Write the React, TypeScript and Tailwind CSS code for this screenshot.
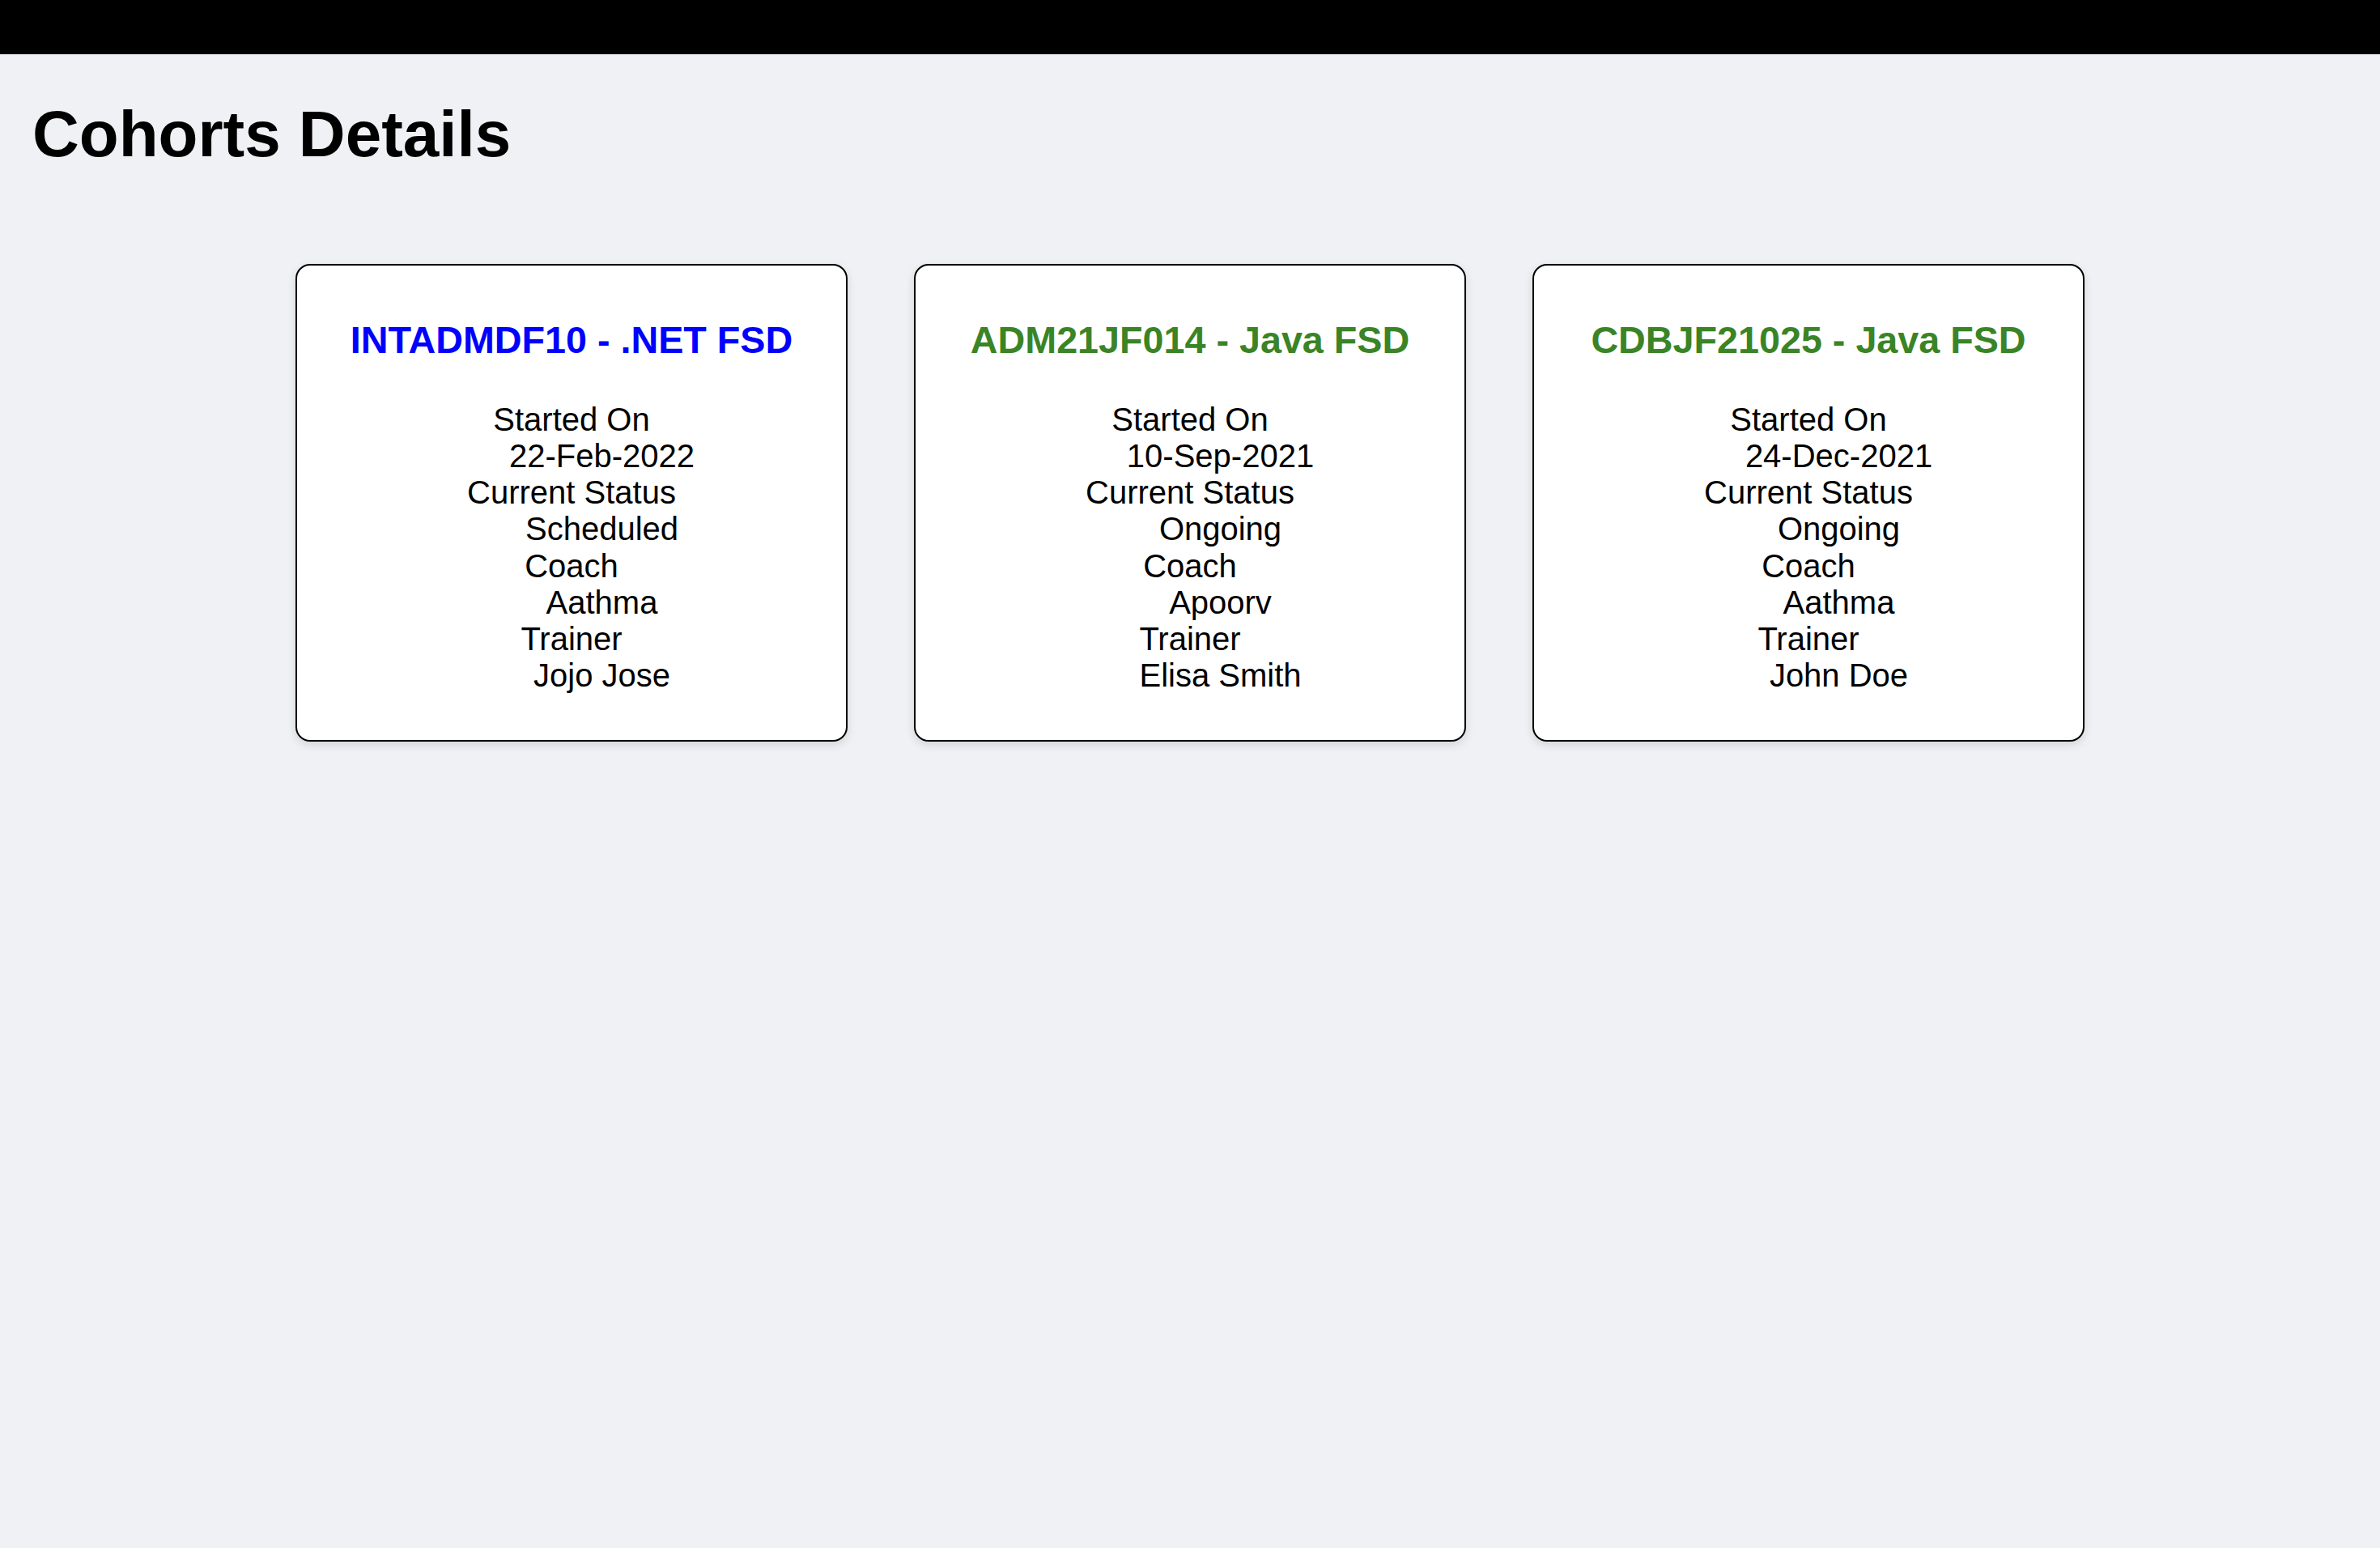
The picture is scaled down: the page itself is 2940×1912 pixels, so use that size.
import React from "react";

interface Cohort {
  code: string;
  technology: string;
  startedOn: string;
  status: string;
  coach: string;
  trainer: string;
}

const COHORTS: Cohort[] = [
  {
    code: "INTADMDF10",
    technology: ".NET FSD",
    startedOn: "22-Feb-2022",
    status: "Scheduled",
    coach: "Aathma",
    trainer: "Jojo Jose",
  },
  {
    code: "ADM21JF014",
    technology: "Java FSD",
    startedOn: "10-Sep-2021",
    status: "Ongoing",
    coach: "Apoorv",
    trainer: "Elisa Smith",
  },
  {
    code: "CDBJF21025",
    technology: "Java FSD",
    startedOn: "24-Dec-2021",
    status: "Ongoing",
    coach: "Aathma",
    trainer: "John Doe",
  },
];

function CohortCard({ cohort }: { cohort: Cohort }) {
  // ongoing cohorts get green, the rest blue
  const titleColor =
    cohort.status === "Ongoing" ? "text-[#3a8426]" : "text-[#0000ff]";

  return (
    <div className="w-[682px] rounded-[18px] border-2 border-black bg-white px-[20px] py-[20px] text-center shadow-[0_4px_12px_rgba(0,0,0,0.12)]">
      <h3
        className={`mt-[46px] mb-[49px] text-[46.7px] font-bold leading-[53px] ${titleColor}`}
      >
        {cohort.code} - {cohort.technology}
      </h3>
      <dl className="mb-[36px] text-[40px] leading-[45.25px]">
        <dt>Started On</dt>
        <dd className="ml-[75px]">{cohort.startedOn}</dd>
        <dt>Current Status</dt>
        <dd className="ml-[75px]">{cohort.status}</dd>
        <dt>Coach</dt>
        <dd className="ml-[75px]">{cohort.coach}</dd>
        <dt>Trainer</dt>
        <dd className="ml-[75px]">{cohort.trainer}</dd>
      </dl>
    </div>
  );
}

export default function App() {
  return (
    <div className="min-h-screen bg-[#f0f1f5] font-['Liberation_Sans',Arial,sans-serif] text-black">
      <div className="h-[67px] bg-black" />
      <h1 className="ml-[40px] mt-[54px] text-[80px] font-bold leading-[90.5px]">
        Cohorts Details
      </h1>
      <div className="mt-[114px] flex justify-center gap-[82px]">
        {COHORTS.map((cohort) => (
          <CohortCard key={cohort.code} cohort={cohort} />
        ))}
      </div>
    </div>
  );
}
